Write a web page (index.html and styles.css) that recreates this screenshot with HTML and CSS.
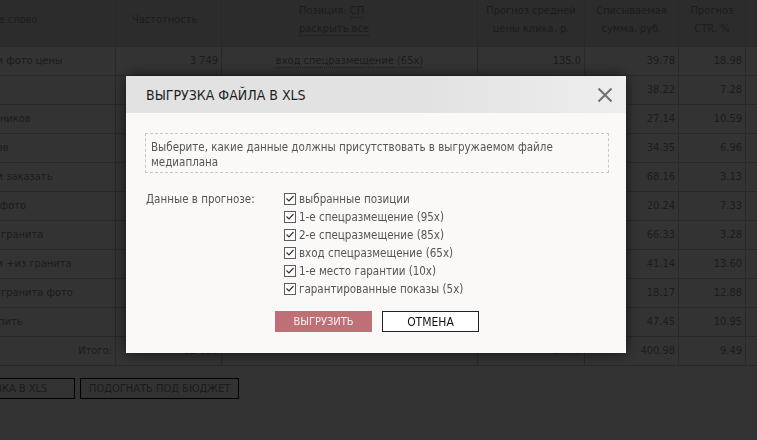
FILE: index.html
```html
<!DOCTYPE html>
<html lang="ru">
<head>
    <meta charset="UTF-8">
    <title>Медиаплан</title>
    <link rel="stylesheet" href="styles.css">
</head>
<body>
    <div class="page">
        <table class="forecast">
            <thead>
                <tr>
                    <th class="c-key">Ключевое слово</th>
                    <th class="c-freq">Частотность</th>
                    <th class="c-pos">Позиция: <a href="#" class="dotted">СП</a><br><a href="#" class="dotted">раскрыть все</a></th>
                    <th class="c-num">Прогноз средней<br>цены клика, р.</th>
                    <th class="c-num">Списываемая<br>сумма, руб.</th>
                    <th class="c-num">Прогноз<br>CTR, %</th>
                    <th></th>
                </tr>
            </thead>
            <tbody>
                <tr><td>памятники фото цены</td><td class="num">3 749</td><td class="pos"><a href="#" class="dotted">вход спецразмещение (65x)</a></td><td class="num">135.0</td><td class="num">39.78</td><td class="num">18.98</td><td></td></tr>
                <tr><td>памятник</td><td class="num">1 250</td><td class="pos"><a href="#" class="dotted">вход спецразмещение (65x)</a></td><td class="num">142.0</td><td class="num">38.22</td><td class="num">7.28</td><td></td></tr>
                <tr><td>фото цветников</td><td class="num">1 104</td><td class="pos"><a href="#" class="dotted">вход спецразмещение (65x)</a></td><td class="num">151.0</td><td class="num">27.14</td><td class="num">10.59</td><td></td></tr>
                <tr><td>памятников</td><td class="num">980</td><td class="pos"><a href="#" class="dotted">вход спецразмещение (65x)</a></td><td class="num">148.0</td><td class="num">34.35</td><td class="num">6.96</td><td></td></tr>
                <tr><td>памятники заказать</td><td class="num">845</td><td class="pos"><a href="#" class="dotted">вход спецразмещение (65x)</a></td><td class="num">160.0</td><td class="num">68.16</td><td class="num">3.13</td><td></td></tr>
                <tr><td>памятник фото</td><td class="num">812</td><td class="pos"><a href="#" class="dotted">вход спецразмещение (65x)</a></td><td class="num">139.0</td><td class="num">20.24</td><td class="num">7.33</td><td></td></tr>
                <tr><td>плитка из гранита</td><td class="num">1 533</td><td class="pos"><a href="#" class="dotted">вход спецразмещение (65x)</a></td><td class="num">155.0</td><td class="num">66.33</td><td class="num">3.28</td><td></td></tr>
                <tr><td>памятники +из гранита</td><td class="num">1 021</td><td class="pos"><a href="#" class="dotted">вход спецразмещение (65x)</a></td><td class="num">144.0</td><td class="num">41.14</td><td class="num">13.60</td><td></td></tr>
                <tr><td>плитка из гранита фото</td><td class="num">640</td><td class="pos"><a href="#" class="dotted">вход спецразмещение (65x)</a></td><td class="num">137.0</td><td class="num">18.17</td><td class="num">12.88</td><td></td></tr>
                <tr><td>плитка купить</td><td class="num">684</td><td class="pos"><a href="#" class="dotted">вход спецразмещение (65x)</a></td><td class="num">150.0</td><td class="num">47.45</td><td class="num">10.95</td><td></td></tr>
            </tbody>
            <tfoot>
                <tr><td class="num">Итого:</td><td class="num">12 618</td><td></td><td class="num">147.0</td><td class="num">400.98</td><td class="num">9.49</td><td></td></tr>
            </tfoot>
        </table>

        <div class="actions">
            <button class="btn btn-xls">ВЫГРУЗКА В XLS</button>
            <button class="btn">ПОДОГНАТЬ ПОД БЮДЖЕТ</button>
        </div>
    </div>

    <div class="overlay"></div>

    <div class="modal">
        <div class="modal-head">
            <h2>ВЫГРУЗКА ФАЙЛА В XLS</h2>
            <a href="#" class="modal-close" title="Закрыть">
                <svg width="16" height="16" viewBox="0 0 16 16"><path d="M1.5 1.5 L14.5 14.5 M14.5 1.5 L1.5 14.5" stroke="#707070" stroke-width="2" fill="none"/></svg>
            </a>
        </div>
        <div class="modal-body">
            <p class="hint">Выберите, какие данные должны присутствовать в выгружаемом файле медиаплана</p>

            <div class="field">
                <div class="field-label">Данные в прогнозе:</div>
                <ul class="checks">
                    <li><span class="check"></span>выбранные позиции</li>
                    <li><span class="check"></span>1-е спецразмещение (95x)</li>
                    <li><span class="check"></span>2-е спецразмещение (85x)</li>
                    <li><span class="check"></span>вход спецразмещение (65x)</li>
                    <li><span class="check"></span>1-е место гарантии (10x)</li>
                    <li><span class="check"></span>гарантированные показы (5x)</li>
                </ul>
            </div>

            <div class="modal-buttons">
                <button class="mbtn mbtn-primary">ВЫГРУЗИТЬ</button>
                <button class="mbtn">ОТМЕНА</button>
            </div>
        </div>
    </div>
</body>
</html>
```

FILE: styles.css
```css
* {
    margin: 0;
    padding: 0;
    box-sizing: border-box;
}

body {
    font-family: "DejaVu Sans Condensed", "DejaVu Sans", sans-serif;
    font-size: 11px;
    background-color: #fafafa;
    color: #8c8c8c;
    overflow: hidden;
}

.page {
    margin-left: -130px;
}

.forecast {
    border-collapse: collapse;
    table-layout: fixed;
    width: 935px;
}

.forecast th,
.forecast td {
    border: 1px solid #ccc;
    padding: 7px 4px;
    line-height: 14px;
    white-space: nowrap;
    overflow: hidden;
    font-weight: normal;
    text-align: left;
}

.forecast thead th {
    background-color: #dcdcdc;
    border-top: none;
    line-height: 18px;
    padding: 2px 4px 8px;
    vertical-align: middle;
}

.forecast td {
    background-color: #fff;
}

.forecast tbody td:first-child {
    padding-left: 75px;
}

.forecast .c-key { width: 245px; padding-left: 82px; }
.forecast .c-freq { width: 106px; padding-left: 16px; }
.forecast .c-pos { width: 256px; padding-left: 77px; }
.forecast .c-num { text-align: center; }
.forecast th:nth-child(4) { width: 107px; }
.forecast th:nth-child(5) { width: 94px; }
.forecast th:nth-child(6) { width: 67px; }

.forecast .num {
    text-align: right;
    padding-right: 3px;
}

.forecast .pos {
    text-align: center;
}

.dotted {
    color: inherit;
    text-decoration: none;
    border-bottom: 1px dotted #8c8c8c;
}

.actions {
    display: flex;
    gap: 5px;
    margin: 12px 0 0 81px;
}

.btn {
    font-family: inherit;
    font-size: 11px;
    color: #8c8c8c;
    background-color: #fafafa;
    border: 1px solid #000;
    height: 21px;
    padding: 0 8px;
    white-space: nowrap;
}

.btn-xls {
    width: 124px;
    text-align: left;
    padding-left: 10px;
}

.overlay {
    position: fixed;
    inset: 0;
    background-color: rgba(0, 0, 0, 0.8);
}

.modal {
    position: fixed;
    left: 126px;
    top: 76px;
    width: 500px;
    background-color: #faf9f7;
    box-shadow: 0 0 14px rgba(0, 0, 0, 0.6);
    color: #555;
    font-size: 11.5px;
}

.modal-head {
    height: 37px;
    display: flex;
    align-items: center;
    justify-content: space-between;
    padding: 0 13px 0 20px;
    background: linear-gradient(to right, #e2e2e2 60%, #eeeeee);
}

.modal-head h2 {
    font-size: 14px;
    font-weight: normal;
    color: #1e1e1e;
}

.modal-close {
    display: flex;
}

.modal-body {
    padding: 20px 17px 21px 19px;
}

.hint {
    border: 1px dashed #c8c8c8;
    padding: 6px 5px 2px;
    line-height: 15px;
}

.field {
    display: flex;
    margin-top: 17px;
}

.field-label {
    width: 139px;
    line-height: 18px;
    padding-left: 1px;
}

.checks {
    list-style: none;
}

.checks li {
    display: flex;
    align-items: center;
    line-height: 18px;
}

.check {
    width: 12px;
    height: 12px;
    border: 1px solid #5c5c5c;
    background: #fff url("data:image/svg+xml,%3Csvg xmlns='http://www.w3.org/2000/svg' width='10' height='10'%3E%3Cpath d='M1.5 4.5 L4 7 L8.5 2' stroke='%23333' stroke-width='1.2' fill='none'/%3E%3C/svg%3E") no-repeat center;
    margin-right: 3px;
    flex-shrink: 0;
}

.modal-buttons {
    display: flex;
    justify-content: center;
    gap: 10px;
    margin-top: 13px;
}

.mbtn {
    width: 97px;
    height: 21px;
    font-family: inherit;
    font-size: 12px;
    background-color: #fff;
    color: #111;
    border: 1px solid #222;
}

.mbtn-primary {
    font-size: 11px;
    background-color: #bf7076;
    border-color: #bf7076;
    color: #fbeeee;
}
```
